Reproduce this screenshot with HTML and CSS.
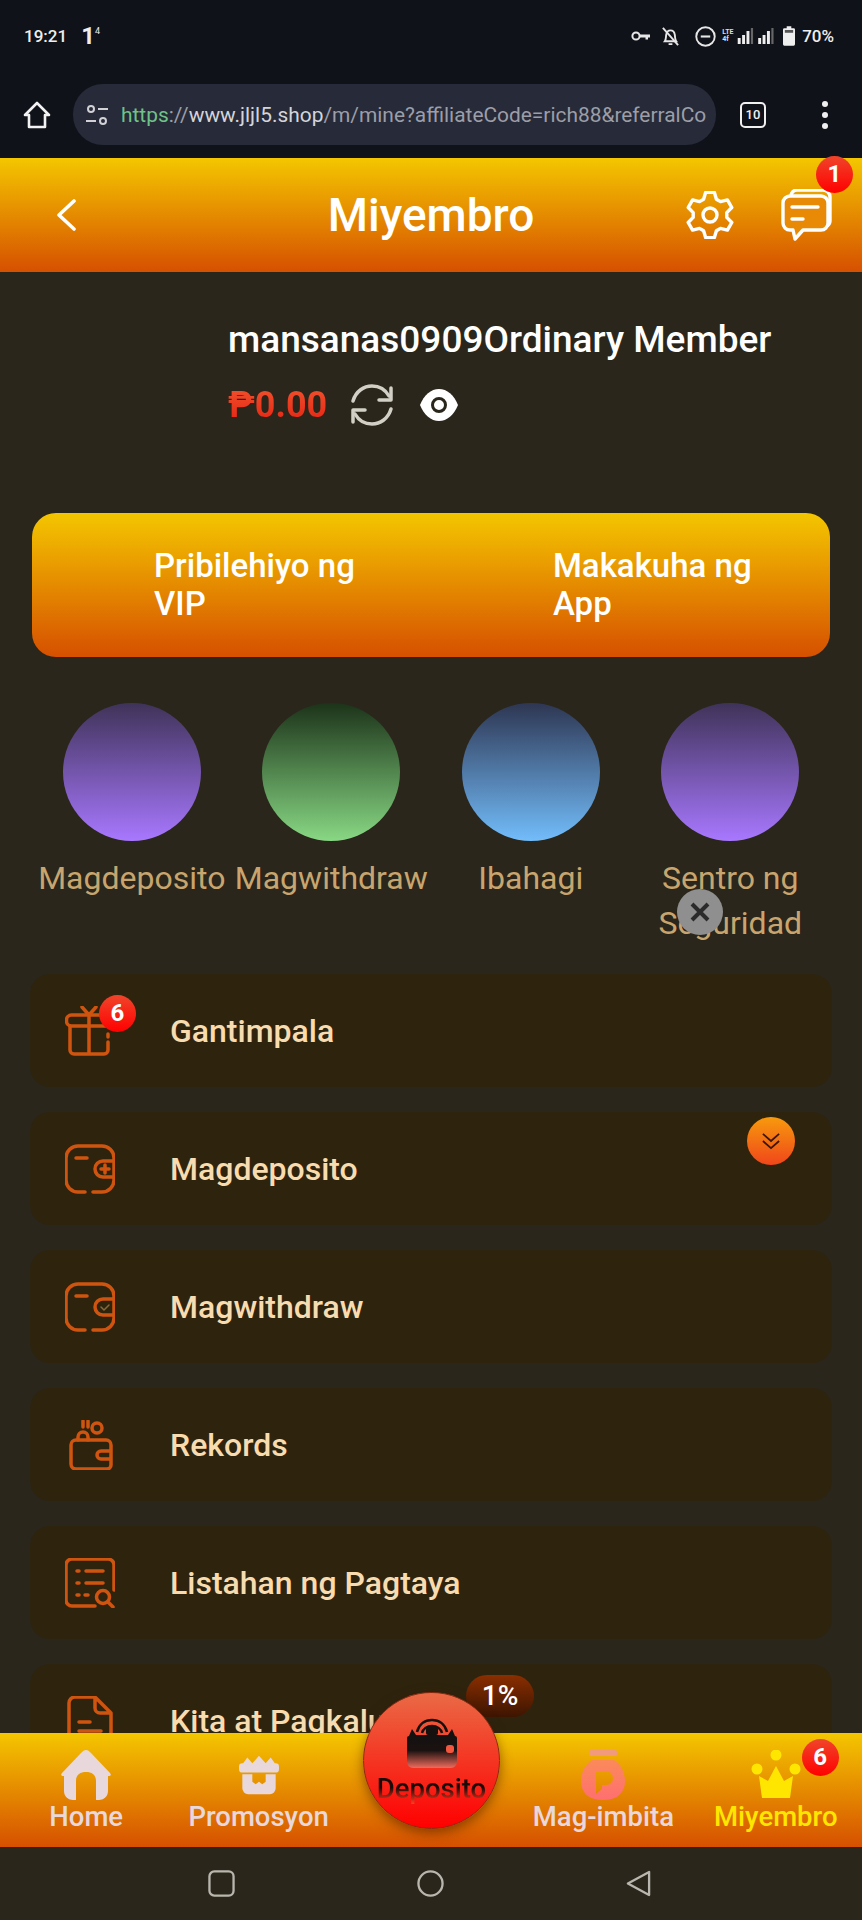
FILE: index.html
```html
<!DOCTYPE html>
<html>
<head>
    <title>Miyembro</title>
    <link rel="stylesheet" href="styles.css">
</head>
<body>
<div class="phone">
    <div class="status-bar">
        <div class="status-left">
            <span class="clock">19:21</span>
            <span class="notif">1<sup>4</sup></span>
        </div>
        <div class="status-right">
            <svg class="st-key" viewBox="0 0 20 12"><circle cx="5" cy="6" r="3.600" fill="none" stroke="#e6e6e6" stroke-width="2"/><path d="M8.500 4.600H19v3h-2v2h-2.500V7.600H8.500z" fill="#e6e6e6"/></svg>
            <svg class="st-bell" viewBox="0 0 20 22"><path d="M4 16c1.500-2 1-4 1.500-7C6 6 8 4.500 10 4.500S14 6 14.500 9c.5 3 0 5 1.500 7zM8 19h4" fill="none" stroke="#e6e6e6" stroke-width="2"/><path d="M2 2l16 18" stroke="#e6e6e6" stroke-width="2"/></svg>
            <svg class="st-dnd" viewBox="0 0 20 20"><circle cx="10" cy="10" r="8.800" fill="none" stroke="#e6e6e6" stroke-width="1.800"/><path d="M5.500 10h9" stroke="#e6e6e6" stroke-width="2"/></svg>
            <span class="st-lte">LTE<br>4f</span>
            <svg class="st-signal" viewBox="0 0 52 16" preserveAspectRatio="none">
                <path d="M1 10h4v6H1zM7 7h4v9H7zM13 3h4v13h-4z" fill="#eee"/><path d="M19 0h3v16h-3z" fill="#666"/>
                <path d="M29 10h4v6h-4zM35 7h4v9h-4zM41 3h4v13h-4z" fill="#eee"/><path d="M47 0h3v16h-3z" fill="#666"/>
            </svg>
            <svg class="st-batt" viewBox="0 0 13 21"><path d="M4 0h5v2h2.500A1.500 1.500 0 0 1 13 3.500v16a1.500 1.500 0 0 1-1.500 1.500h-10A1.500 1.500 0 0 1 0 19.500v-16A1.500 1.500 0 0 1 1.500 2H4z" fill="#eee"/><path d="M2 4h9v3H2z" fill="#555"/></svg>
            <span class="batt-text">70%</span>
        </div>
    </div>

    <div class="toolbar">
        <svg class="tb-home" viewBox="0 0 28 28"><path d="M14 2L2 14h4v12h16V14h4z" fill="none" stroke="#f2f2f2" stroke-width="2.600" stroke-linejoin="round"/></svg>
        <div class="address">
            <svg class="tb-tune" viewBox="0 0 24 24"><circle cx="6" cy="6" r="3" fill="none" stroke="#d0d0d5" stroke-width="2"/><path d="M13 6h10M1 18h10" stroke="#d0d0d5" stroke-width="2"/><circle cx="18" cy="18" r="3" fill="none" stroke="#d0d0d5" stroke-width="2"/></svg>
            <span class="url"><span class="url-https">https</span>://<span class="url-host">www.jljl5.shop</span>/m/mine?affiliateCode=rich88&amp;referralCo</span>
        </div>
        <div class="tab-count">10</div>
        <div class="tb-more"><i></i><i></i><i></i></div>
    </div>

    <div class="app-header">
        <svg class="hd-back" viewBox="0 0 20 32"><path d="M18 2L3 16l15 14" fill="none" stroke="#fff" stroke-width="3.600" stroke-linecap="round" stroke-linejoin="round"/></svg>
        <h1 class="hd-title">Miyembro</h1>
        <svg class="hd-gear" viewBox="0 0 48 48"><path d="M17.600 8.200L19.600 1.400H28.400L30.400 8.200L34.500 10.600L41.400 8.900L45.800 16.500L40.800 21.600V26.400L45.800 31.500L41.400 39.100L34.500 37.400L30.400 39.800L28.400 46.600H19.600L17.600 39.800L13.500 37.400L6.600 39.100L2.200 31.500L7.200 26.400V21.600L2.200 16.500L6.600 8.900L13.500 10.600Z" fill="none" stroke="#fff" stroke-width="3.400" stroke-linejoin="round"/><circle cx="24" cy="24" r="7" fill="none" stroke="#fff" stroke-width="3.400"/></svg>
        <div class="hd-chat">
            <svg viewBox="0 0 52 52"><path d="M10 7a6 6 0 0 1 6-6h26a7 7 0 0 1 7 7v24a6 6 0 0 1-3 5" fill="none" stroke="#fff" stroke-width="3.400"/><path d="M9 7h31a7 7 0 0 1 7 7v20a7 7 0 0 1-7 7H22l-8 9-2-9H9a7 7 0 0 1-7-7V14a7 7 0 0 1 7-7z" fill="#e88a06" stroke="#fff" stroke-width="3.400" stroke-linejoin="round"/><path d="M11 18h26M11 30h11" stroke="#fff" stroke-width="3.400" stroke-linecap="round"/></svg>
            <span class="badge badge-chat">1</span>
        </div>
    </div>

    <div class="main">
        <div class="profile">
            <div class="name">mansanas0909Ordinary Member</div>
            <div class="balance-row">
                <span class="balance">₱0.00</span>
                <svg class="ic-refresh" viewBox="0 0 46 42"><path d="M4 17C7 7 15 2 23 2c7 0 13 3 17 10" fill="none" stroke="#d2cfc6" stroke-width="3.500" stroke-linecap="round"/><path d="M42 4v12H30" fill="none" stroke="#d2cfc6" stroke-width="3.500" stroke-linecap="round" stroke-linejoin="round"/><path d="M42 25C39 35 31 40 23 40c-7 0-13-3-17-10" fill="none" stroke="#d2cfc6" stroke-width="3.500" stroke-linecap="round"/><path d="M4 38V26h12" fill="none" stroke="#d2cfc6" stroke-width="3.500" stroke-linecap="round" stroke-linejoin="round"/></svg>
                <svg class="ic-eye" viewBox="0 0 38 32"><path d="M0 16C4 6 11 0 19 0s15 6 19 16c-4 10-11 16-19 16S4 26 0 16z" fill="#fff"/><circle cx="19" cy="16" r="6.500" fill="none" stroke="#2a261b" stroke-width="3"/></svg>
            </div>
        </div>

        <div class="vip-card">
            <div class="vip-item">Pribilehiyo ng VIP</div>
            <div class="vip-item">Makakuha ng App</div>
        </div>

        <div class="shortcuts">
            <div class="shortcut"><div class="circle c-purple"></div><div class="shortcut-label">Magdeposito</div></div>
            <div class="shortcut"><div class="circle c-green"></div><div class="shortcut-label">Magwithdraw</div></div>
            <div class="shortcut"><div class="circle c-blue"></div><div class="shortcut-label">Ibahagi</div></div>
            <div class="shortcut"><div class="circle c-purple"></div><div class="shortcut-label">Sentro ng Seguridad</div></div>
        </div>

        <div class="menu">
            <div class="menu-row">
                <div class="menu-icon">
                    <svg viewBox="0 0 50 50"><g class="line"><rect x="1.500" y="9" width="44" height="11" rx="5"/><path d="M5 20v24a4 4 0 0 0 4 4h30a4 4 0 0 0 4-4v-8M43 31v-3M24 9v39M17 1l7 8 7-8"/></g></svg>
                    <span class="badge badge-gift">6</span>
                </div>
                <span>Gantimpala</span>
            </div>
            <div class="menu-row">
                <div class="menu-icon">
                    <svg viewBox="0 0 50 50"><g class="line"><path d="M20 48H13A12 12 0 0 1 1 36V14A12 12 0 0 1 13 2h24a12 12 0 0 1 12 12v22a12 12 0 0 1-12 12H28M11 14h11M49 17H38a8 8 0 0 0 0 16h11M36 25h8M40 21v8"/></g></svg>
                </div>
                <span>Magdeposito</span>
            </div>
            <div class="menu-row">
                <div class="menu-icon">
                    <svg viewBox="0 0 50 50"><g class="line"><path d="M20 48H13A12 12 0 0 1 1 36V14A12 12 0 0 1 13 2h24a12 12 0 0 1 12 12v22a12 12 0 0 1-12 12H28M11 14h11M49 17H38a8 8 0 0 0 0 16h11"/><path class="thin" d="M36 25l3 3 5-5"/></g></svg>
                </div>
                <span>Magwithdraw</span>
            </div>
            <div class="menu-row">
                <div class="menu-icon">
                    <svg viewBox="0 0 50 50"><g class="line"><path d="M18 1v6M23 1v6"/><circle cx="32" cy="8" r="5"/><path d="M13 20v-3a5 5 0 0 1 10 0v3"/><path d="M11 20h30a5 5 0 0 1 5 5v20a4 4 0 0 1-4 4H11a5 5 0 0 1-5-5V25a5 5 0 0 1 5-5zM46 31H36a4 4 0 0 0 0 8h10"/></g></svg>
                </div>
                <span>Rekords</span>
            </div>
            <div class="menu-row">
                <div class="menu-icon">
                    <svg viewBox="0 0 50 50"><g class="line"><path d="M30 48H7a6 6 0 0 1-6-6V7a6 6 0 0 1 6-6h36a6 6 0 0 1 6 6v25M12 13h2M21 13h17M12 25h2M21 25h17M12 37h2M20 37h3"/><circle cx="38" cy="39" r="6.500"/><path d="M43 44l5 5"/></g></svg>
                </div>
                <span>Listahan ng Pagtaya</span>
            </div>
            <div class="menu-row">
                <div class="menu-icon">
                    <svg viewBox="0 0 50 50"><g class="line"><path d="M30 1H10a6 6 0 0 0-6 6v36a6 6 0 0 0 6 6h30a6 6 0 0 0 6-6V17zM30 1v11a5 5 0 0 0 5 5h11M14 26h11M14 35h22"/></g></svg>
                </div>
                <span>Kita at Pagkalugi</span>
            </div>
        </div>

        <div class="float-close">
            <svg viewBox="0 0 22 22"><path d="M3 3l16 16M19 3L3 19" stroke="#2b2b2b" stroke-width="4"/></svg>
        </div>
        <div class="float-down">
            <svg viewBox="0 0 24 20"><path d="M3 2l9 8 9-8M3 10l9 8 9-8" fill="none" stroke="#3b1500" stroke-width="1.900"/></svg>
        </div>
    </div>

    <div class="tabbar">
        <div class="tab">
            <svg class="tab-icon" viewBox="0 0 50 50"><path d="M25 0c2 0 3 1 5 3l19 20c1.500 2 1 3-2 3v15c0 6-5 9-9 9h-3V31c0-6-4-9-10-9s-10 3-10 9v19h-3c-4 0-9-3-9-9V26c-3 0-3.500-1-2-3L20 3c2-2 3-3 5-3z" fill="#e8d8dc"/></svg>
            <span>Home</span>
        </div>
        <div class="tab">
            <svg class="tab-icon" viewBox="-5 -5 60 60"><path d="M6 11l5-7 6 7 8-9 8 9 6-7 5 7h1a4 4 0 0 1 4 4v3a4 4 0 0 1-4 4H5a4 4 0 0 1-4-4v-3a4 4 0 0 1 4-4zM5 24h12v9l4 3 4-3 4 3 4-3v-9h12v17a7 7 0 0 1-7 7H12a7 7 0 0 1-7-7z" fill="#e8d8dc"/></svg>
            <span>Promosyon</span>
        </div>
        <div class="tab"></div>
        <div class="tab">
            <svg class="tab-icon" viewBox="0 0 50 50"><defs><linearGradient id="bagFill" x1="0" y1="0" x2="0" y2="1"><stop offset="0" stop-color="#fb8a5a"/><stop offset="1" stop-color="#ff6f70"/></linearGradient></defs><rect x="11" y="0" width="28" height="6" rx="2" fill="#f29a7c"/><path fill-rule="evenodd" d="M14 10h22c7 4 11 13 11 21 0 12-8 19-22 19S3 43 3 31c0-8 4-17 11-21zM18 21v23l6-5v-4h4a7 7 0 0 0 0-14z" fill="url(#bagFill)"/></svg>
            <span>Mag-imbita</span>
        </div>
        <div class="tab tab-active">
            <svg class="tab-icon" viewBox="0 0 50 50"><circle cx="25" cy="5" r="5.500" fill="#ffe600"/><circle cx="6" cy="19" r="5.500" fill="#ffe600"/><circle cx="44" cy="19" r="5.500" fill="#ffe600"/><path d="M25 16l8 15 9-5-3 22H11L8 26l9 5z" fill="#ffe600"/></svg>
            <span>Miyembro</span>
            <span class="badge badge-tab">6</span>
        </div>

        <div class="rate-pill">1%</div>
        <div class="deposit-btn">
            <svg viewBox="0 0 50 50"><defs><linearGradient id="walletFill" x1="0" y1="0" x2="0" y2="1"><stop offset="0" stop-color="#111"/><stop offset="0.55" stop-color="#1a1210"/><stop offset="1" stop-color="#f06b5d"/></linearGradient></defs><path d="M10 14C12 6 18 2 25 2s13 4 15 12M15 15c1-4 5-7 10-7s9 3 10 7" fill="none" stroke="#16100e" stroke-width="2.500"/><rect x="19" y="9" width="12" height="8" rx="2" fill="#16100e"/><path d="M5 11l4 6h32l4-6 3 7a2 2 0 0 1 2 2v24a6 6 0 0 1-6 6H6a6 6 0 0 1-6-6V20a2 2 0 0 1 2-2z" fill="url(#walletFill)"/><rect x="39" y="27" width="8" height="8" rx="3" fill="#f2563f"/></svg>
            <span class="deposit-label">Deposito</span>
        </div>
    </div>

    <div class="android-nav">
        <svg class="an-square" viewBox="0 0 28 28"><rect x="1.500" y="1.500" width="25" height="25" rx="5" fill="none" stroke="#b8b6ae" stroke-width="2.400"/></svg>
        <svg class="an-circle" viewBox="0 0 28 28"><circle cx="14" cy="14" r="12.500" fill="none" stroke="#b8b6ae" stroke-width="2.400"/></svg>
        <svg class="an-back" viewBox="0 0 28 28"><path d="M25 2v24L3 14z" fill="none" stroke="#b8b6ae" stroke-width="2.400" stroke-linejoin="round"/></svg>
    </div>
</div>
</body>
</html>
```

FILE: styles.css
```css
* {
    box-sizing: border-box;
}
body {
    margin: 0;
    font-family: Roboto, "Liberation Sans", sans-serif;
    background-color: #2a261b;
}
svg {
    display: block;
}
.phone {
    width: 862px;
    height: 1920px;
    display: flex;
    flex-direction: column;
    overflow: hidden;
}

/* status bar */
.status-bar {
    height: 60px;
    background-color: #10121a;
    color: #eee;
    display: flex;
    align-items: center;
    justify-content: space-between;
    padding: 12px 28px 0 24px;
}
.status-left {
    display: flex;
    align-items: center;
    gap: 14px;
}
.clock {
    font-size: 17px;
    font-weight: 500;
}
.notif {
    font-size: 24px;
    font-weight: 700;
    line-height: 24px;
}
.notif sup {
    font-size: 9px;
    font-weight: 400;
    vertical-align: 10px;
    line-height: 0;
}
.status-right {
    display: flex;
    align-items: center;
}
.st-key {
    width: 20px;
    height: 12px;
    margin-right: 10px;
}
.st-bell {
    width: 19px;
    height: 21px;
    margin-right: 15px;
}
.st-dnd {
    width: 21px;
    height: 21px;
    margin-right: 6px;
}
.st-lte {
    font-size: 7px;
    line-height: 7px;
    font-weight: 700;
    width: 15px;
    color: #ddd;
}
.st-signal {
    width: 38px;
    height: 16px;
    margin-right: 8px;
}
.st-batt {
    width: 12px;
    height: 20px;
    margin-right: 7px;
}
.batt-text {
    font-size: 17px;
    font-weight: 500;
}

/* browser toolbar */
.toolbar {
    height: 98px;
    background-color: #10121a;
    display: flex;
    align-items: center;
    padding: 11px 0 0 23px;
}
.tb-home {
    width: 28px;
    height: 28px;
    margin-right: 22px;
}
.address {
    width: 643px;
    height: 61px;
    border-radius: 30px;
    background-color: #272a38;
    display: flex;
    align-items: center;
    padding-left: 12px;
    gap: 12px;
    overflow: hidden;
}
.tb-tune {
    width: 24px;
    height: 24px;
    flex-shrink: 0;
}
.url {
    font-size: 20.900px;
    color: #9c9ea8;
    white-space: nowrap;
}
.url-https {
    color: #6fc289;
}
.url-host {
    color: #d4d5da;
}
.tab-count {
    width: 26px;
    height: 26px;
    margin-left: 24px;
    border: 2.500px solid #f0f0f0;
    border-radius: 5px;
    color: #f0f0f0;
    font-size: 13px;
    font-weight: 500;
    line-height: 21px;
    text-align: center;
}
.tb-more {
    margin-left: 56px;
    display: flex;
    flex-direction: column;
    gap: 5px;
}
.tb-more i {
    display: block;
    width: 6px;
    height: 6px;
    border-radius: 50%;
    background-color: #f0f0f0;
}

/* app header */
.app-header {
    position: relative;
    height: 114px;
    flex-shrink: 0;
    background: linear-gradient(#f4c600, #d65000);
    display: flex;
    align-items: center;
    padding: 0 29px 0 56px;
}
.hd-back {
    width: 20px;
    height: 32px;
}
.hd-title {
    flex: 1;
    margin: 0;
    padding-left: 100px;
    font-size: 46px;
    font-weight: 500;
    color: #fff;
    text-align: center;
}
.hd-gear {
    width: 48px;
    height: 48px;
    margin-right: 47px;
}
.hd-chat {
    position: relative;
    width: 52px;
    height: 52px;
}
.hd-chat svg {
    width: 52px;
    height: 52px;
}

/* badges */
.badge {
    position: absolute;
    width: 37px;
    height: 37px;
    border-radius: 50%;
    background: linear-gradient(#f0452a, #ff0000);
    color: #fff;
    font-size: 24px;
    font-weight: 700;
    line-height: 37px;
    text-align: center;
}
.badge-chat {
    top: -33px;
    right: -20px;
}
.badge-gift {
    top: -11px;
    left: 34px;
}
.badge-tab {
    top: 6px;
    left: 112px;
}

/* main content */
.main {
    position: relative;
    flex: 1;
    min-height: 0;
    overflow: hidden;
}
.profile {
    padding: 46px 0 0 228px;
}
.name {
    font-size: 37px;
    line-height: 44px;
    font-weight: 500;
    color: #fff;
}
.balance-row {
    display: flex;
    align-items: center;
    margin-top: 21px;
    height: 44px;
}
.balance {
    font-size: 36px;
    font-weight: 700;
    background: linear-gradient(#f0552f, #e62010);
    -webkit-background-clip: text;
    background-clip: text;
    color: transparent;
}
.ic-refresh {
    width: 46px;
    height: 42px;
    margin-left: 22px;
}
.ic-eye {
    width: 38px;
    height: 32px;
    margin-left: 25px;
}
.vip-card {
    margin: 86px 32px 0;
    height: 144px;
    border-radius: 24px;
    background: linear-gradient(#f4c600, #d65000);
    display: grid;
    grid-template-columns: 1fr 1fr;
    align-items: center;
}
.vip-item {
    padding: 0 40px 0 122px;
    font-size: 33px;
    line-height: 38px;
    font-weight: 500;
    color: #fff;
}
.shortcuts {
    margin: 46px 32px 0;
    display: grid;
    grid-template-columns: repeat(4, 1fr);
}
.shortcut {
    display: flex;
    flex-direction: column;
    align-items: center;
}
.circle {
    width: 138px;
    height: 138px;
    border-radius: 50%;
}
.c-purple {
    background: linear-gradient(#3f3358, #a878ff);
}
.c-green {
    background: linear-gradient(#1c3319, #88d884);
}
.c-blue {
    background: linear-gradient(#2e3652, #72bdfb);
}
.shortcut-label {
    margin-top: 15px;
    font-size: 32px;
    line-height: 45px;
    color: #c8a56e;
    text-align: center;
}
.menu {
    margin: 28px 30px 0;
    display: flex;
    flex-direction: column;
    gap: 25px;
}
.menu-row {
    height: 113px;
    flex-shrink: 0;
    border-radius: 20px;
    background-color: #2e240e;
    display: flex;
    align-items: center;
    padding-left: 35px;
    gap: 55px;
    font-size: 32px;
    font-weight: 500;
    color: #f8dcb0;
}
.menu-icon {
    position: relative;
    width: 50px;
    height: 50px;
}
.menu-icon svg {
    width: 50px;
    height: 50px;
}
.line {
    fill: none;
    stroke: #cf5410;
    stroke-width: 3.500;
    stroke-linecap: round;
    stroke-linejoin: round;
}
.thin {
    stroke: #8a6a3a;
    stroke-width: 1.500;
}
.float-close {
    position: absolute;
    left: 677px;
    top: 617px;
    width: 46px;
    height: 46px;
    border-radius: 50%;
    background-color: #8f8f8f;
    display: flex;
    align-items: center;
    justify-content: center;
}
.float-close svg {
    width: 22px;
    height: 22px;
}
.float-down {
    position: absolute;
    left: 747px;
    top: 845px;
    width: 48px;
    height: 48px;
    border-radius: 50%;
    background: linear-gradient(#f79a0d, #f0461a);
    display: flex;
    align-items: center;
    justify-content: center;
}
.float-down svg {
    width: 22px;
    height: 18px;
}

/* tab bar */
.tabbar {
    position: relative;
    height: 114px;
    flex-shrink: 0;
    background: linear-gradient(#f4c600, #d65000);
    display: grid;
    grid-template-columns: repeat(5, 1fr);
}
.tab {
    position: relative;
    display: flex;
    flex-direction: column;
    align-items: center;
    padding-top: 17px;
    font-size: 27.500px;
    line-height: 32px;
    font-weight: 500;
    color: #e8d8dc;
}
.tab-icon {
    width: 50px;
    height: 50px;
    margin-bottom: 1px;
}
.tab-active {
    color: #ffe600;
}
.rate-pill {
    position: absolute;
    left: 466px;
    top: -58px;
    width: 68px;
    height: 42px;
    border-radius: 21px;
    background: linear-gradient(#8a2e00, #3d1500);
    color: #fff;
    font-size: 28px;
    font-weight: 500;
    line-height: 42px;
    text-align: center;
}
.deposit-btn {
    position: absolute;
    left: 363px;
    top: -41px;
    width: 137px;
    height: 137px;
    border-radius: 50%;
    border: 1px solid #8a2a10;
    background: linear-gradient(#ea6a45, #ff0000);
    box-shadow: 0 4px 12px rgba(60, 20, 0, 0.5);
    display: flex;
    flex-direction: column;
    align-items: center;
    padding-top: 25px;
}
.deposit-btn svg {
    width: 50px;
    height: 50px;
}
.deposit-label {
    margin-top: 5px;
    font-size: 27.500px;
    line-height: 32px;
    font-weight: 500;
    background: linear-gradient(#1a0a08 45%, #ff3a20 95%);
    -webkit-background-clip: text;
    background-clip: text;
    color: transparent;
}

/* android nav */
.android-nav {
    height: 73px;
    flex-shrink: 0;
    background-color: #2a261b;
    display: flex;
    align-items: center;
    padding-left: 208px;
}
.android-nav svg {
    width: 27px;
    height: 27px;
}
.an-square {
    margin-right: 182px;
}
.an-circle {
    margin-right: 181px;
}
```
